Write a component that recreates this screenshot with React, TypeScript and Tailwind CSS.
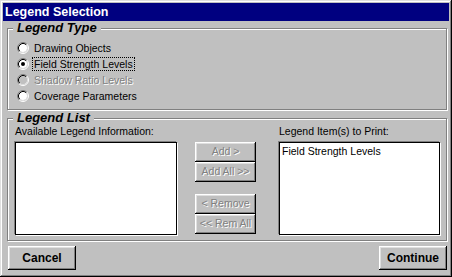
import React from "react";

type RadioProps = {
  label: string;
  checked?: boolean;
  disabled?: boolean;
  focused?: boolean;
};

const RadioDot = ({ checked, disabled }: { checked?: boolean; disabled?: boolean }) => (
  <svg width="12" height="12" viewBox="0 0 12 12" className="shrink-0">
    <path d="M2.11 9.89 A5.5 5.5 0 0 1 9.89 2.11" fill="none" stroke="#808080" strokeWidth="1" />
    <path d="M9.89 2.11 A5.5 5.5 0 0 1 2.11 9.89" fill="none" stroke="#ffffff" strokeWidth="1" />
    <circle cx="6" cy="6" r="4" fill={disabled ? "#c0c0c0" : "#ffffff"} />
    <path d="M2.82 9.18 A4.5 4.5 0 0 1 9.18 2.82" fill="none" stroke="#000000" strokeWidth="1" />
    <path d="M9.18 2.82 A4.5 4.5 0 0 1 2.82 9.18" fill="none" stroke="#dfdfdf" strokeWidth="1" />
    {checked && <circle cx="6" cy="6" r="2" fill="#000000" />}
  </svg>
);

const Radio = ({ label, checked, disabled, focused }: RadioProps) => (
  <div className="h-4 flex items-center">
    <RadioDot checked={checked} disabled={disabled} />
    <span
      className={
        "ml-[3px] px-[1px] border leading-[12px] " +
        (focused ? "border-dotted border-black " : "border-transparent ") +
        (disabled ? "text-[#808080] [text-shadow:1px_1px_0_#fff]" : "text-black")
      }
    >
      {label}
    </span>
  </div>
);

const SmallButton = ({ label }: { label: string }) => (
  <div className="h-5 w-[61px] flex items-center justify-center text-[#808080] [text-shadow:1px_1px_0_#fff] shadow-[inset_-1px_-1px_0_#000,inset_1px_1px_0_#fff,inset_-2px_-2px_0_#808080,inset_2px_2px_0_#dfdfdf]">
    {label}
  </div>
);

const BigButton = ({ label, className }: { label: string; className?: string }) => (
  <button
    className={
      "w-[68px] h-6 font-bold text-[12px] text-black shadow-[inset_-1px_-1px_0_#000,inset_1px_1px_0_#fff,inset_-2px_-2px_0_#808080,inset_2px_2px_0_#dfdfdf] " +
      (className ?? "")
    }
  >
    {label}
  </button>
);

const App = () => {
  return (
    <div className="w-[452px] h-[277px] bg-[#c0c0c0] p-[3px] flex flex-col text-[10.5px] font-['Liberation_Sans',Arial,sans-serif] shadow-[inset_-1px_-1px_0_#000,inset_1px_1px_0_#dfdfdf,inset_-2px_-2px_0_#808080,inset_2px_2px_0_#fff]">
      <div className="h-[18px] shrink-0 bg-[#000080] text-white font-bold text-[12.5px] pl-[2px] flex items-center">
        Legend Selection
      </div>

      {/* Legend Type */}
      <div className="relative shrink-0 mt-[7px] ml-[4px] w-[440px] h-[82px] border border-[#808080] shadow-[1px_1px_0_#fff,inset_1px_1px_0_#fff] pt-[11px] pl-[9px]">
        <span className="absolute left-[5px] -top-[8px] bg-[#c0c0c0] px-[4px] font-bold italic text-[13px] leading-[14px]">
          Legend Type
        </span>
        <Radio label="Drawing Objects" />
        <Radio label="Field Strength Levels" checked focused />
        <Radio label="Shadow Ratio Levels" disabled />
        <Radio label="Coverage Parameters" />
      </div>

      {/* Legend List */}
      <div className="relative shrink-0 mt-[8px] ml-[4px] w-[440px] h-[123px] border border-[#808080] shadow-[1px_1px_0_#fff,inset_1px_1px_0_#fff] flex pl-[7px]">
        <span className="absolute left-[5px] -top-[8px] bg-[#c0c0c0] px-[4px] font-bold italic text-[13px] leading-[14px]">
          Legend List
        </span>
        <div className="pt-[6px] w-[162px]">
          <div className="leading-[13px]">Available Legend Information:</div>
          <div className="mt-[4px] h-[93px] bg-white border border-black shadow-[-1px_-1px_0_#808080,1px_1px_0_#fff]" />
        </div>
        <div className="ml-[18px] pt-[23px] flex flex-col">
          <SmallButton label="Add >" />
          <SmallButton label="Add All >>" />
          <div className="h-3" />
          <SmallButton label="< Remove" />
          <SmallButton label="<< Rem All" />
        </div>
        <div className="ml-[23px] pt-[6px] w-[161px]">
          <div className="leading-[13px]">Legend Item(s) to Print:</div>
          <div className="mt-[4px] h-[93px] bg-white border border-black shadow-[-1px_-1px_0_#808080,1px_1px_0_#fff] pl-[2px] pt-[2px] leading-[13px]">
            Field Strength Levels
          </div>
        </div>
      </div>

      <div className="mt-[5px] flex justify-between">
        <BigButton label="Cancel" className="ml-[5px]" />
        <BigButton label="Continue" className="mr-[2px]" />
      </div>
    </div>
  );
};

export default App;
